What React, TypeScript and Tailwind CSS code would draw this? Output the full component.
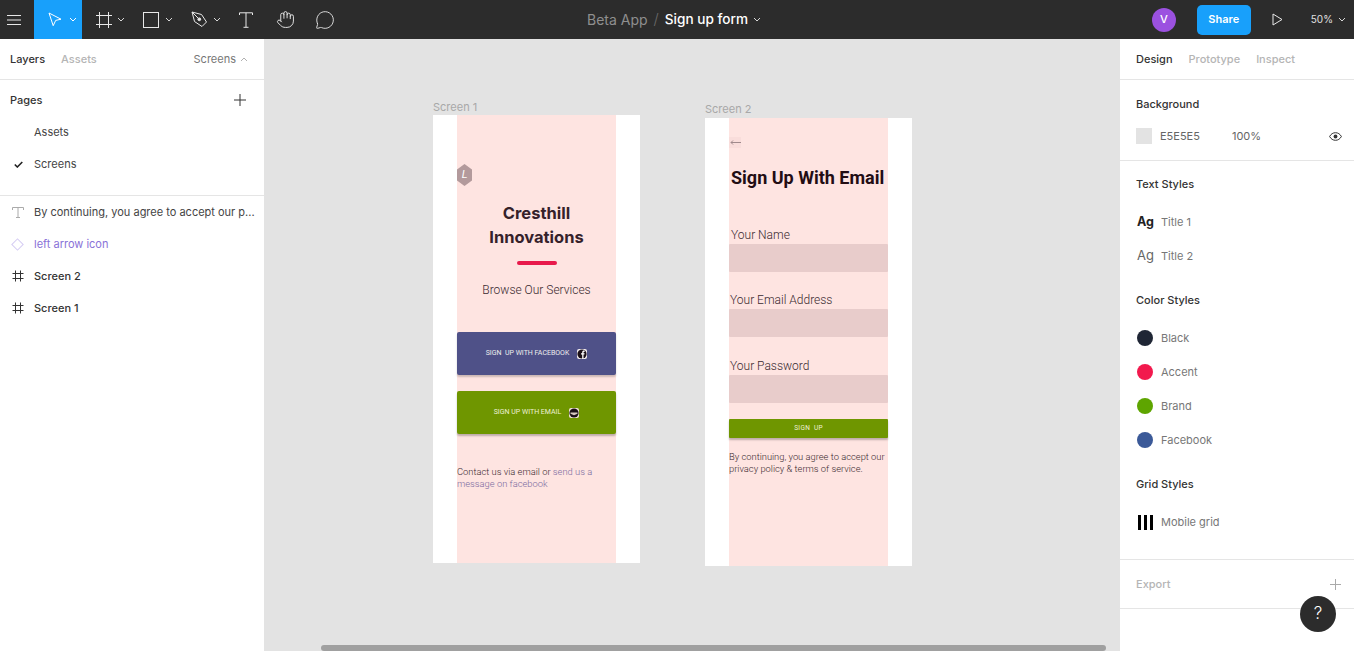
import type { ReactNode } from 'react'
import { Hand, MessageCircle } from 'lucide-react'

const inter = "font-['Inter',sans-serif]"

function Chevron({ up = false, stroke = '#d8d8d8' }: { up?: boolean; stroke?: string }) {
  return (
    <svg width="8" height="5" viewBox="0 0 8 5" fill="none" className={up ? 'rotate-180' : ''}>
      <path d="M1 1l3 3 3-3" stroke={stroke} strokeWidth="1" />
    </svg>
  )
}

function GridIcon({ stroke = '#333' }: { stroke?: string }) {
  return (
    <svg width="12" height="12" viewBox="0 0 12 12" fill="none" stroke={stroke} strokeWidth="1">
      <path d="M3.5 0.5v11M8.5 0.5v11M0.5 3.5h11M0.5 8.5h11" />
    </svg>
  )
}

function TopBar() {
  return (
    <div className="flex h-[39px] shrink-0 items-center bg-[#2c2c2c] text-white">
      <div className="flex w-[34px] shrink-0 pl-[7px]">
        <svg width="14" height="12" viewBox="0 0 14 12" stroke="#e8e8e8" strokeWidth="1">
          <path d="M0 1.5h14M0 6h14M0 10.5h14" />
        </svg>
      </div>
      <div className="flex h-full w-[48px] shrink-0 items-center bg-[#18a0fb] pl-[14px]">
        <svg width="14" height="15" viewBox="0 0 14 15" fill="none" stroke="white" strokeWidth="1">
          <path d="M1 1l12 6.2-5.3 1.2-2.5 5.3z" />
        </svg>
        <span className="ml-[7px] flex"><Chevron stroke="white" /></span>
      </div>
      <div className="flex w-[48px] shrink-0 items-center pl-[14px]">
        <svg width="16" height="16" viewBox="0 0 16 16" fill="none" stroke="#e8e8e8" strokeWidth="1">
          <path d="M3.5 0v16M12.5 0v16M0 3.5h16M0 12.5h16" />
        </svg>
        <span className="ml-[5px] flex"><Chevron /></span>
      </div>
      <div className="flex w-[48px] shrink-0 items-center pl-[13px]">
        <div className="h-[16px] w-[16px] border border-[#e8e8e8]" />
        <span className="ml-[6px] flex"><Chevron /></span>
      </div>
      <div className="flex w-[48px] shrink-0 items-center pl-[13px]">
        <svg width="17" height="17" viewBox="0 0 17 17" fill="none" stroke="#e8e8e8" strokeWidth="1">
          <path d="M1 1l9.5 2.5 5 7.5-4.5 4.5-7.5-5z" />
          <path d="M1 1l6.5 6.5" />
          <circle cx="8.3" cy="8.3" r="1.4" fill="#e8e8e8" />
        </svg>
        <span className="ml-[5px] flex"><Chevron /></span>
      </div>
      <div className="flex w-[39px] shrink-0 items-center pl-[13px]">
        <svg width="14" height="16" viewBox="0 0 14 16" fill="none" stroke="#e8e8e8" strokeWidth="1">
          <path d="M0.5 3V0.8h13V3M7 0.8v14.5M4.5 15.3h5" />
        </svg>
      </div>
      <div className="flex w-[40px] shrink-0 items-center pl-[11px]">
        <Hand size={19} strokeWidth={1.2} color="#e8e8e8" />
      </div>
      <div className="flex w-[40px] shrink-0 items-center pl-[10px]">
        <MessageCircle size={20} strokeWidth={1.1} color="#e8e8e8" />
      </div>
      <div className={`${inter} ml-[242px] flex items-center`}>
        <span className="text-[14px] text-[#8f8f8f]">Beta App</span>
        <span className="mx-[6px] text-[15px] font-light text-[#6a6a6a]">/</span>
        <span className="text-[13.6px] font-medium text-white">Sign up form</span>
        <span className="ml-[5px] flex"><Chevron /></span>
      </div>
      <div className="flex-1" />
      <div className={`${inter} flex items-center`}>
        <div className="flex h-[24px] w-[24px] items-center justify-center rounded-full bg-[#9b51e0] text-[11px] font-medium">V</div>
        <div className="ml-[21px] flex h-[30px] w-[54px] items-center justify-center rounded-[5px] bg-[#18a0fb] text-[11px] font-semibold">Share</div>
        <svg className="ml-[21px]" width="11" height="13" viewBox="0 0 11 13" fill="none" stroke="#e8e8e8" strokeWidth="1">
          <path d="M1 1l9 5.5-9 5.5z" />
        </svg>
        <span className="ml-[28px] text-[10px] text-[#e0e0e0]">50%</span>
        <span className="ml-[5px] mr-[8px] flex"><Chevron /></span>
      </div>
    </div>
  )
}

function LeftPanel() {
  return (
    <div className={`${inter} flex w-[264px] shrink-0 flex-col bg-white text-[11px] text-[#444]`}>
      <div className="flex h-[41px] shrink-0 items-center border-b border-[#e5e5e5] px-[10px]">
        <span className="font-medium text-[#333]">Layers</span>
        <span className="ml-[16px] font-medium text-[#b5b5b5]">Assets</span>
        <span className="ml-auto mr-[4px] text-[#777]">Screens</span>
        <span className="mr-[6px] flex"><Chevron up stroke="#b0b0b0" /></span>
      </div>
      <div className="mt-[4px] flex h-[32px] shrink-0 items-center justify-between pl-[10px] pr-[18px]">
        <span className="font-medium text-[#333]">Pages</span>
        <svg width="12" height="12" viewBox="0 0 12 12" stroke="#333" strokeWidth="1">
          <path d="M6 0v12M0 6h12" />
        </svg>
      </div>
      <div className="flex h-[32px] shrink-0 items-center pl-[34px]">Assets</div>
      <div className="flex h-[32px] shrink-0 items-center pl-[14px]">
        <svg width="9" height="7" viewBox="0 0 9 7" fill="none" stroke="#222" strokeWidth="1.6">
          <path d="M0.8 3.5l2.5 2.5 5-5" />
        </svg>
        <span className="ml-[11px]">Screens</span>
      </div>
      <div className="flex-none border-b border-[#e5e5e5] pt-[15px]" />
      <div className="flex h-[32px] shrink-0 items-center pl-[12px]">
        <svg width="12" height="11" viewBox="0 0 12 11" fill="none" stroke="#aaa" strokeWidth="1">
          <path d="M0.5 3V0.5h11V3M6 0.5v10M4 10.5h4" />
        </svg>
        <span className="ml-[10px] truncate pr-[8px]">By continuing, you agree to accept our p...</span>
      </div>
      <div className="flex h-[32px] shrink-0 items-center pl-[12px]">
        <div className="ml-px h-[9px] w-[9px] rotate-45 border border-[#d5ccf3]" />
        <span className="ml-[12px] text-[#8a72d8]">left arrow icon</span>
      </div>
      <div className="flex h-[32px] shrink-0 items-center pl-[12px]">
        <GridIcon />
        <span className="ml-[10px] font-medium text-[#333]">Screen 2</span>
      </div>
      <div className="flex h-[32px] shrink-0 items-center pl-[12px]">
        <GridIcon />
        <span className="ml-[10px] font-medium text-[#333]">Screen 1</span>
      </div>
    </div>
  )
}

function ScreenOne() {
  return (
    <div className="absolute left-[169px] top-[76px] h-[448px] w-[207px] bg-white">
      <span className={`${inter} absolute left-0 top-[-14px] text-[11px] leading-[13px] text-[#a8a8a8]`}>Screen 1</span>
      <div className="ml-[24px] flex h-full w-[159px] flex-col items-center bg-[#fee4e1] font-['Roboto',sans-serif]">
        <div className="mt-[49px] flex h-[22px] w-[15px] items-center justify-center self-start bg-[#b39a9c] text-[11px] italic text-white [clip-path:polygon(50%_0,100%_25%,100%_75%,50%_100%,0_75%,0_25%)]">L</div>
        <h1 className={`${inter} mt-[15px] text-center text-[16.5px] font-bold leading-[24px] text-[#35212a]`}>
          Cresthill
          <br />
          Innovations
        </h1>
        <div className="mt-[12px] h-[4px] w-[40px] rounded-full bg-[#e8194b]" />
        <p className="mt-[17px] text-[12px] font-light leading-[16px] text-[#3a2a30]">Browse Our Services</p>
        <div className="mt-[34px] flex h-[43px] w-full items-center justify-center rounded-[2px] bg-[#4f5188] text-[7px] text-[#eee] shadow-[0_2px_2px_rgba(0,0,0,0.2)]">
          <span className="whitespace-pre">SIGN  UP WITH FACEBOOK</span>
          <svg className="ml-[8px]" width="10" height="10" viewBox="0 0 10 10">
            <rect width="10" height="10" rx="2" fill="#f4eef0" />
            <circle cx="5" cy="5" r="4.6" fill="#1b1018" />
            <path d="M5.2 10V5.6H4V4.2h1.2V3.2c0-1 .6-1.6 1.6-1.6h.8V3h-.6c-.4 0-.5.2-.5.5v.7h1.1l-.2 1.4h-.9V10z" fill="white" />
          </svg>
        </div>
        <div className="mt-[16px] flex h-[43px] w-full items-center justify-center rounded-[2px] bg-[#6f9600] text-[7px] text-[#eef0d8] shadow-[0_2px_2px_rgba(0,0,0,0.25)]">
          <span>SIGN UP WITH EMAIL</span>
          <svg className="ml-[8px]" width="10" height="10" viewBox="0 0 10 10">
            <rect width="10" height="10" rx="2" fill="#f2e3d8" />
            <circle cx="5" cy="5" r="4.6" fill="#1b1018" />
            <path d="M1.5 4.5h7v1.3L5 7.2 1.5 5.8z" fill="#d8c8c0" />
          </svg>
        </div>
        <p className="mt-[32px] w-full text-[9.35px] font-light leading-[12px] text-[#3a2a30]">
          <span>Contact us via email or </span>
          <span className="text-[#7a6aa0]">send us a</span>
          <br />
          <span className="text-[#7a6aa0]">message on facebook</span>
        </p>
      </div>
    </div>
  )
}

function Field({ label, mt, pl }: { label: string; mt: string; pl: string }) {
  return (
    <div className={`w-full ${mt}`}>
      <div className={`text-[12px] font-light leading-[14px] text-[#3a2a30] ${pl}`}>{label}</div>
      <div className="mt-[2px] h-[28px] w-full rounded-[1px] bg-[#e8cccb]" />
    </div>
  )
}

function ScreenTwo() {
  return (
    <div className="absolute left-[441px] top-[79px] h-[448px] w-[207px] bg-white">
      <span className={`${inter} absolute left-0 top-[-15px] text-[11px] leading-[13px] text-[#a8a8a8]`}>Screen 2</span>
      <div className="ml-[24px] flex h-full w-[159px] flex-col bg-[#fee4e1] font-['Roboto',sans-serif]">
        <div className="mt-[19px] flex h-[11px] w-[12px] shrink-0 items-center justify-end bg-[#f9dddb]">
          <svg width="11" height="5" viewBox="0 0 11 5" fill="none" stroke="#a08a8c" strokeWidth="1">
            <path d="M11 2.5H1M3 0.5L1 2.5l2 2" />
          </svg>
        </div>
        <h2 className="ml-[2px] mt-[18px] whitespace-nowrap text-[18px] font-bold leading-[24px] text-[#230d14]">Sign Up With Email</h2>
        <Field label="Your Name" mt="mt-[38px]" pl="pl-[2px]" />
        <Field label="Your Email Address" mt="mt-[21px]" pl="pl-[1px]" />
        <Field label="Your Password" mt="mt-[22px]" pl="pl-[1px]" />
        <div className="mt-[16px] flex h-[19px] w-full items-center justify-center whitespace-pre rounded-[1px] bg-[#6f9600] text-[6.5px] tracking-[0.3px] text-[#eef0d8] shadow-[0_2px_2px_rgba(0,0,0,0.25)]">
          SIGN  UP
        </div>
        <p className="mt-[13px] text-[9.35px] font-light leading-[12px] text-[#3a2a30]">
          By continuing, you agree to accept our privacy policy &amp; terms of service.
        </p>
      </div>
    </div>
  )
}

function StyleRow({ icon, label }: { icon: ReactNode; label: string }) {
  return (
    <div className="flex h-[34px] items-center pl-[16px]">
      <div className="flex w-[25px] shrink-0 items-center">{icon}</div>
      <span className="text-[#777]">{label}</span>
    </div>
  )
}

function Dot({ color }: { color: string }) {
  return <div className={`ml-px h-[16px] w-[16px] rounded-full ${color}`} />
}

function RightPanel() {
  return (
    <div className={`${inter} relative flex w-[234px] shrink-0 flex-col bg-white text-[11px] text-[#444]`}>
      <div className="flex h-[41px] shrink-0 items-center border-b border-[#e5e5e5] pl-[16px] font-medium">
        <span className="text-[#333]">Design</span>
        <span className="ml-[16px] text-[#b5b5b5]">Prototype</span>
        <span className="ml-[16px] text-[#b5b5b5]">Inspect</span>
      </div>
      <div className="flex h-[81px] shrink-0 flex-col border-b border-[#e5e5e5] pl-[16px]">
        <div className="mt-[16px] font-medium leading-[16px] text-[#333]">Background</div>
        <div className="mt-[16px] flex items-center">
          <div className="h-[16px] w-[16px] bg-[#e3e3e3]" />
          <span className="ml-[8px] text-[#666]">E5E5E5</span>
          <span className="ml-[32px] text-[#666]">100%</span>
          <svg className="ml-auto mr-[12px]" width="13" height="9" viewBox="0 0 13 9" fill="none" stroke="#333" strokeWidth="1">
            <path d="M0.6 4.5C2 2 4 0.7 6.5 0.7S11 2 12.4 4.5C11 7 9 8.3 6.5 8.3S2 7 0.6 4.5z" />
            <circle cx="6.5" cy="4.5" r="1.9" fill="#333" stroke="none" />
          </svg>
        </div>
      </div>
      <div className="mt-[15px] pl-[16px] font-medium leading-[16px] text-[#333]">Text Styles</div>
      <div className="mt-[13px]">
        <div className="flex h-[34px] items-center pl-[17px]">
          <span className="w-[24px] text-[12.5px] font-bold text-[#222]">Ag</span>
          <span className="text-[#777]">Title 1</span>
        </div>
        <div className="flex h-[34px] items-center pl-[17px]">
          <span className="w-[24px] text-[13px] text-[#666]">Ag</span>
          <span className="text-[#777]">Title 2</span>
        </div>
      </div>
      <div className="mt-[19px] pl-[16px] font-medium leading-[16px] text-[#333]">Color Styles</div>
      <div className="mt-[13px]">
        <StyleRow icon={<Dot color="bg-[#1f2635]" />} label="Black" />
        <StyleRow icon={<Dot color="bg-[#f2194d]" />} label="Accent" />
        <StyleRow icon={<Dot color="bg-[#5ea500]" />} label="Brand" />
        <StyleRow icon={<Dot color="bg-[#3b5998]" />} label="Facebook" />
      </div>
      <div className="mt-[19px] pl-[16px] font-medium leading-[16px] text-[#333]">Grid Styles</div>
      <div className="mt-[13px]">
        <StyleRow
          icon={
            <div className="flex h-[15px] gap-[3px] pl-[2px]">
              <div className="w-[3px] bg-black" />
              <div className="w-[3px] bg-black" />
              <div className="w-[3px] bg-black" />
            </div>
          }
          label="Mobile grid"
        />
      </div>
      <div className="mt-[20px] flex h-[50px] shrink-0 items-center justify-between border-y border-[#e5e5e5] pl-[16px] pr-[13px]">
        <span className="font-medium text-[#b5b5b5]">Export</span>
        <svg width="11" height="11" viewBox="0 0 11 11" stroke="#aaa" strokeWidth="1">
          <path d="M5.5 0v11M0 5.5h11" />
        </svg>
      </div>
      <div className="absolute left-[180px] top-[557px] flex h-[36px] w-[36px] items-center justify-center rounded-full bg-[#2c2c2c] text-[17px] font-light text-white">?</div>
    </div>
  )
}

export default function App() {
  return (
    <div className="flex h-[651px] w-[1354px] flex-col overflow-hidden bg-white">
      <TopBar />
      <div className="flex min-h-0 flex-1">
        <LeftPanel />
        <div className="relative flex-1 bg-[#e3e3e3]">
          <ScreenOne />
          <ScreenTwo />
          <div className="absolute bottom-0 left-[57px] h-[6px] w-[785px] rounded-full bg-[#a0a0a0]" />
        </div>
        <RightPanel />
      </div>
    </div>
  )
}
